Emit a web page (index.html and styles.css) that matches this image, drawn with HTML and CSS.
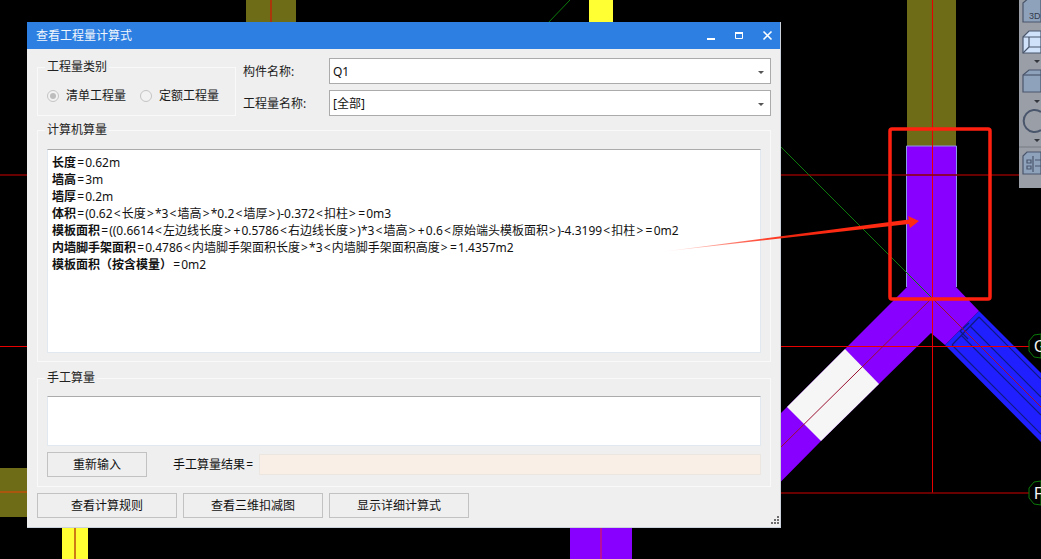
FILE: index.html
```html
<!DOCTYPE html>
<html lang="zh-CN">
<head>
<meta charset="utf-8">
<title>查看工程量计算式</title>
<link rel="stylesheet" href="styles.css">
</head>
<body>
<svg class="canvas" width="1041" height="559" viewBox="0 0 1041 559">
  <rect class="olive" x="246" y="0" width="50" height="24"/>
  <rect class="yellow" x="589" y="0" width="24" height="24"/>
  <rect class="olive" x="0" y="468" width="30" height="49"/>
  <rect class="yellow" x="62" y="525" width="26" height="34"/>
  <rect class="purple" x="570" y="525" width="62" height="34"/>
  <rect class="olive" x="907" y="0" width="49" height="146"/>
  <polygon class="blue" points="979,311 1041,373 1041,442 945,345"/>
  <g class="blueline">
    <path d="M979 317L1041 379M970 326L1041 397M961 335L1041 415M952 345L1041 434M979 317L952 345"/>
    <path d="M969 323L960 331L968 339"/>
  </g>
  <polygon class="purple" points="907,146 956,146 956,287 979,311 945,345 931,333 879,384 821,441 740,523 740,454 845,349 907,287"/>
  <polygon class="white" points="845,349 879,384 821,441 787,407"/>
  <path class="edge" d="M906.5 146H956.5M906.5 146V287M956.5 146V287"/>
  <path class="ln-red" d="M271 0V24M932.5 0V493M0 346.5H30M781 346.5H1030"/>
  <path class="ln-dark" d="M0 175H30M781 175H1020M781 493H1030"/>
  <path class="ln-orange" d="M0 492H30M75 525V559"/>
  <path class="ln-pink" d="M601 525V559"/>
  <path class="ln-green" d="M547 24L570 0M780 146L932 298"/>
  <path class="ln-thin" d="M932 298L781 447M932 298L1041 407"/>
  <polygon class="tag" points="1041,334 1034,335 1029,341 1029,351 1034,357 1041,358"/>
  <polygon class="tag" points="1041,481 1034,482 1029,488 1029,498 1034,504 1041,505"/>
  <text class="tagtext" x="1034" y="352">G</text>
  <text class="tagtext" x="1034" y="499">F</text>
  <rect class="toolbar" x="1019" y="0" width="22" height="188"/>
  <g class="tool">
    <path d="M1023 3L1030 -3H1041V22H1023Z" class="tool-a"/>
    <text class="tool-3d" x="1029" y="19">3D</text>
    <path d="M1023 37L1029 31H1041V53H1023Z" class="tool-b"/>
    <path d="M1023 37H1041M1029 37V47H1041M1029 47L1023 53"/>
    <path d="M1023 75L1029 70H1041V92H1023Z" class="tool-a"/>
    <path d="M1023 75H1041"/>
    <path d="M1041 112A11 11 0 1 0 1041 130" class="tool-ring"/>
    <path d="M1023 156L1027 152H1041V174H1023Z" class="tool-a"/>
    <path d="M1027 160H1031V163H1027ZM1027 166H1031V169H1027ZM1035 160H1041M1035 166H1041M1033 156V172"/>
  </g>
  <path class="tool-sep" d="M1019 147H1041"/>
  <path class="tool-arrow" d="M1034 60H1040L1037 63ZM1034 100H1040L1037 103ZM1034 139H1040L1037 142Z"/>
</svg>

<main class="window">
  <header class="titlebar">
    <span class="title">查看工程量计算式</span>
    <span class="winbtns">
      <svg width="12" height="12" viewBox="0 0 12 12"><rect class="glyph" x="1" y="8" width="8" height="2"/></svg>
      <svg width="12" height="12" viewBox="0 0 12 12"><path class="glyph-o" d="M1.5 2.5H8.5V8.5H1.5Z"/><rect class="glyph" x="1" y="2" width="8" height="2"/></svg>
      <svg width="12" height="12" viewBox="0 0 12 12"><path class="glyph-x" d="M1.5 1.5L9.5 9.5M9.5 1.5L1.5 9.5"/></svg>
    </span>
  </header>
  <div class="body">
    <div class="toprow">
      <fieldset class="group group-type">
        <legend>工程量类别</legend>
        <div class="radios">
          <label class="radio"><i class="dot on"></i>清单工程量</label>
          <label class="radio"><i class="dot"></i>定额工程量</label>
        </div>
      </fieldset>
      <div class="fields">
        <div class="field"><span class="field-label">构件名称:</span><div class="combo"><span>Q1</span><i class="caret"></i></div></div>
        <div class="field"><span class="field-label">工程量名称:</span><div class="combo"><span>[全部]</span><i class="caret"></i></div></div>
      </div>
    </div>
    <fieldset class="group group-calc">
      <legend>计算机算量</legend>
      <div class="memo">
        <p><b>长度</b><span class="op">=</span>0.62m</p>
        <p><b>墙高</b><span class="op">=</span>3m</p>
        <p><b>墙厚</b><span class="op">=</span>0.2m</p>
        <p><b>体积</b><span class="op">=</span>(0.62<span class="op">&lt;</span>长度<span class="op">&gt;</span>*3<span class="op">&lt;</span>墙高<span class="op">&gt;</span>*0.2<span class="op">&lt;</span>墙厚<span class="op">&gt;</span>)-0.372<span class="op">&lt;</span>扣柱<span class="op">&gt;</span><span class="op">=</span>0m3</p>
        <p><b>模板面积</b><span class="op">=</span>((0.6614<span class="op">&lt;</span>左边线长度<span class="op">&gt;</span><span class="op">+</span>0.5786<span class="op">&lt;</span>右边线长度<span class="op">&gt;</span>)*3<span class="op">&lt;</span>墙高<span class="op">&gt;</span><span class="op">+</span>0.6<span class="op">&lt;</span>原始端头模板面积<span class="op">&gt;</span>)-4.3199<span class="op">&lt;</span>扣柱<span class="op">&gt;</span><span class="op">=</span>0m2</p>
        <p><b>内墙脚手架面积</b><span class="op">=</span>0.4786<span class="op">&lt;</span>内墙脚手架面积长度<span class="op">&gt;</span>*3<span class="op">&lt;</span>内墙脚手架面积高度<span class="op">&gt;</span><span class="op">=</span>1.4357m2</p>
        <p><b>模板面积（按含模量）</b><span class="op">=</span>0m2</p>
      </div>
    </fieldset>
    <fieldset class="group group-manual">
      <legend>手工算量</legend>
      <div class="memo memo-small"></div>
      <div class="manual-row">
        <button class="btn btn-reset" type="button">重新输入</button>
        <span class="result-label">手工算量结果<span class="op">=</span></span>
        <div class="result"></div>
      </div>
    </fieldset>
    <div class="actions">
      <button class="btn btn-wide" type="button">查看计算规则</button>
      <button class="btn btn-wide" type="button">查看三维扣减图</button>
      <button class="btn btn-wide" type="button">显示详细计算式</button>
    </div>
  </div>
  <svg class="grip" width="10" height="10" viewBox="0 0 10 10">
    <path d="M7 0h2v2H7zM4 3h2v2H4zM7 3h2v2H7zM1 6h2v2H1zM4 6h2v2H4zM7 6h2v2H7z"/>
  </svg>
</main>

<svg class="overlay" width="1041" height="559" viewBox="0 0 1041 559">
  <defs>
    <linearGradient id="fade" x1="660" y1="252" x2="840" y2="230" gradientUnits="userSpaceOnUse">
      <stop offset="0" stop-color="#ff2a12" stop-opacity="0"/>
      <stop offset="0.6" stop-color="#ff2a12" stop-opacity="0.9"/>
      <stop offset="1" stop-color="#ff2a12"/>
    </linearGradient>
  </defs>
  <polygon fill="url(#fade)" points="660,252 909,219.5 908,216 919,221 910,228 909,224"/>
  <rect class="marker" x="890" y="129" width="100" height="170" rx="2"/>
</svg>
</body>
</html>
```
FILE: styles.css
```css
* { box-sizing: border-box; }
html, body { margin: 0; height: 100%; }
body {
  position: relative;
  width: 1041px;
  height: 559px;
  overflow: hidden;
  background: #000;
  font: 12px/16px "Noto Sans", "Noto Sans CJK SC", sans-serif;
  color: #111;
}
.canvas, .overlay { position: absolute; left: 0; top: 0; display: block; }
.overlay { pointer-events: none; }

.olive { fill: #6e6c17; }
.yellow { fill: #ffff33; }
.purple { fill: #8800ff; }
.blue { fill: #1f1fff; }
.white { fill: #f6f6f6; }
.edge { fill: none; stroke: #8a9ae8; stroke-width: 1; }
.blueline { fill: none; stroke: #101a80; stroke-width: 1.2; }
.ln-red { fill: none; stroke: #e80000; stroke-width: 1; }
.ln-dark { fill: none; stroke: #8c0000; stroke-width: 1.4; }
.ln-orange { fill: none; stroke: #c0500c; stroke-width: 1.5; }
.ln-pink { fill: none; stroke: #c8147c; stroke-width: 1.5; }
.ln-green { fill: none; stroke: #0c7a0c; stroke-width: 1; }
.ln-thin { fill: none; stroke: #9b1030; stroke-width: 1; }
.tag { fill: #000; stroke: #0a7a0a; stroke-width: 1; }
.tagtext { fill: #f4f4f4; font: 16px "Liberation Sans", sans-serif; }
.toolbar { fill: #9a9ea6; }
.tool { fill: none; stroke: #4a566c; stroke-width: 1.2; }
.tool-a { fill: #8fa2bc; }
.tool-b { fill: #cfe2fa; }
.tool-ring { stroke-width: 2; }
.tool-3d { fill: #333c4c; stroke: none; font: 9px "Liberation Sans", sans-serif; }
.tool-sep { stroke: #777c84; stroke-width: 1; }
.tool-arrow { fill: #33363c; }
.marker { fill: none; stroke: #ff2010; stroke-width: 3.5; }

.window {
  position: absolute;
  left: 27px;
  top: 22px;
  width: 754px;
  height: 506px;
  background: #efefef;
  border-right: 1px solid #ccd2dc;
  border-bottom: 1px solid #ccd2dc;
}
.titlebar {
  display: flex;
  align-items: center;
  justify-content: space-between;
  height: 27px;
  padding: 0 6px 0 9px;
  background: #2d80e2;
  color: #f2f7fd;
  font-size: 12px;
}
.winbtns { display: flex; gap: 16px; }
.glyph { fill: #fff; }
.glyph-o { fill: none; stroke: #fff; stroke-width: 1; }
.glyph-x { fill: none; stroke: #fff; stroke-width: 1.6; }

.body { padding: 9px 9px 0 10px; }
.toprow { display: flex; gap: 7px; }
.group {
  margin: 0;
  min-width: 0;
  border: 1px solid #f9f9f9;
}
.group legend {
  margin-left: -2px;
  padding: 0 2px;
  line-height: 16px;
  color: #222;
}
.group-type { width: 200px; height: 57px; margin-top: 1px; padding: 13px 9px 0; }
.radios { display: flex; gap: 14px; }
.radio { display: flex; align-items: center; gap: 7px; color: #1c1c1c; }
.dot {
  position: relative;
  display: block;
  width: 12px;
  height: 12px;
  border: 1px solid #c4c4c4;
  border-radius: 50%;
  background: #f2f2f2;
}
.dot.on::after {
  content: "";
  position: absolute;
  left: 2px;
  top: 2px;
  width: 6px;
  height: 6px;
  border-radius: 50%;
  background: #bdbdbd;
}
.fields { display: flex; flex-direction: column; gap: 6px; width: 528px; }
.field { display: flex; align-items: center; }
.field-label { width: 86px; padding-top: 2px; color: #1c1c1c; }
.combo {
  display: flex;
  align-items: center;
  justify-content: space-between;
  width: 442px;
  height: 26px;
  padding: 2px 6px 0 3px;
  background: #fff;
  border: 1px solid #ababab;
}
.caret {
  width: 0;
  height: 0;
  border-left: 3px solid transparent;
  border-right: 3px solid transparent;
  border-top: 3px solid #555;
}
.group-calc { height: 240px; margin-top: 6px; padding: 11px 9px 0; }
.memo {
  height: 204px;
  padding: 4px;
  background: #fff;
  border: 1px solid #e2e8f0;
  border-top-color: #ababab;
  line-height: 17px;
}
.memo p { margin: 0; white-space: nowrap; }
.memo b { font-weight: 700; }
.op { padding: 0 1.15px; }
.memo-small { height: 50px; }
.group-manual { height: 117px; margin-top: 8px; padding: 10px 9px 0; }
.manual-row { display: flex; align-items: center; margin-top: 6px; }
.btn {
  height: 25px;
  padding: 0;
  background: #efefef;
  border: 1px solid #c2c2c2;
  border-radius: 0;
  color: #111;
  font: inherit;
}
.btn-reset { width: 100px; }
.result-label { margin-left: 26px; width: 86px; white-space: nowrap; }
.result {
  flex: 1;
  height: 21px;
  background: #f9efe6;
  border: 1px solid #ebe6e0;
}
.actions { display: flex; gap: 6px; margin-top: 6px; }
.btn-wide { width: 140px; }
.grip { position: absolute; right: 0; bottom: 1px; }
.grip path { fill: #6e6e6e; }
```
